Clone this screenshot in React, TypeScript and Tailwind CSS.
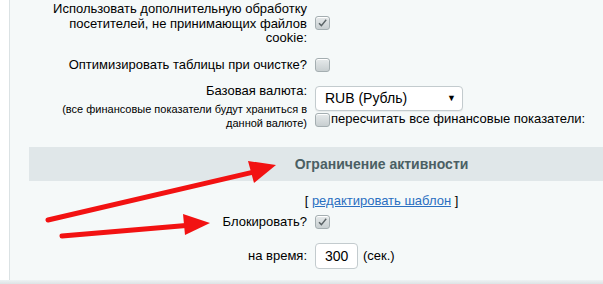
import React from 'react';

const Checkbox = ({ checked = false }: { checked?: boolean }) => (
  <span className="inline-flex w-[15px] h-[14px] rounded-[3px] border border-[#a4aeb1] bg-gradient-to-b from-[#e6eaeb] to-[#c8cfd1] shadow-[inset_0_1px_0_#fff] items-center justify-center shrink-0">
    {checked && (
      <svg width="11" height="10" viewBox="0 0 11 10">
        <polyline points="2,5.2 4.4,7.6 9.2,1.8" fill="none" stroke="#5a6366" strokeWidth="1.4" />
      </svg>
    )}
  </span>
);

const Row = ({
  label,
  children,
  className = '',
}: {
  label: React.ReactNode;
  children: React.ReactNode;
  className?: string;
}) => (
  <div className={`grid grid-cols-[282px_423px] ${className}`}>
    <div className="pr-[4px] text-right">{label}</div>
    <div className="pl-[4px]">{children}</div>
  </div>
);

export default function App() {
  return (
    <div className="relative w-[603px] h-[284px] overflow-hidden bg-white font-['Liberation_Sans',Arial,sans-serif] text-[13px] leading-[14.5px] text-black">
      <div className="ml-[9px] h-full border-l border-[#dbe2e4] bg-[#f5f9f9] pl-[19px]">
        <div className="w-[705px]">
          {/* cookie processing */}
          <Row label={<span>Использовать дополнительную обработку<br />посетителей, не принимающих файлов<br />cookie:</span>} className="h-[48px] items-center">
            <Checkbox checked />
          </Row>

          <Row label="Оптимизировать таблицы при очистке?" className="h-[34px] items-center">
            <div className="flex items-center">
              <Checkbox />
            </div>
          </Row>

          {/* currency */}
          <Row
            className="h-[65px] items-start"
            label={
              <div className="pt-[2px]">
                <div>Базовая валюта:</div>
                <div className="mt-[3px] text-[11px] leading-[14px]">
                  (все финансовые показатели будут храниться в<br />данной валюте)
                </div>
              </div>
            }
          >
            <div className="pt-[4px]">
              <div className="flex items-center justify-between w-[148px] h-[25px] pl-[9px] pr-[6px] bg-white border border-[#c3cbce] rounded-[4px] shadow-[0_1px_1px_rgba(0,0,0,0.06)] text-[14px]">
                <span>RUB (Рубль)</span>
                <span className="text-[9px] leading-none">▼</span>
              </div>
              <div className="mt-[2px] flex items-center h-[13px]">
                <Checkbox />
                <span className="ml-[1px]">пересчитать все финансовые показатели:</span>
              </div>
            </div>
          </Row>

          {/* section header */}
          <div className="h-[34px] flex items-center justify-center bg-[#e0e7e9] font-bold text-[14px] text-[#4b5f64]">
            Ограничение активности
          </div>

          <div className="h-[30px] pt-[13px] text-center">
            [ <a className="text-[#2a6fc1] underline">редактировать шаблон</a> ]
          </div>

          <Row label="Блокировать?" className="h-[22px] items-center">
            <div className="flex items-center">
              <Checkbox checked />
            </div>
          </Row>

          <Row label="на время:" className="h-[38px] pt-[8px] items-center">
            <div className="flex items-center">
              <div className="w-[43px] h-[26px] flex items-center pl-[9px] bg-white border border-[#c3cbce] rounded-[4px] text-[14px]">
                300
              </div>
              <span className="ml-[5px]">(сек.)</span>
            </div>
          </Row>

          <Row label="" className="pt-[9px]">
            <div className="w-[43px] h-[26px] bg-white border border-[#c3cbce] rounded-[4px]" />
          </Row>
        </div>
      </div>

      {/* bottom shade */}
      <div className="absolute left-0 right-0 bottom-0 h-[4px] bg-gradient-to-b from-[#eef2f3] to-[#dde3e5]" />

      {/* red annotation arrows */}
      <svg className="absolute inset-0 pointer-events-none" width="603" height="284" viewBox="0 0 603 284">
        <line x1="48" y1="220" x2="258" y2="171" stroke="#f21212" strokeWidth="5" strokeLinecap="round" />
        <polygon points="276,165 248,161 254,183" fill="#f21212" />
        <line x1="62" y1="236" x2="192" y2="225" stroke="#f21212" strokeWidth="5" strokeLinecap="round" />
        <polygon points="210,223 183,214 185,235" fill="#f21212" />
      </svg>
    </div>
  );
}
